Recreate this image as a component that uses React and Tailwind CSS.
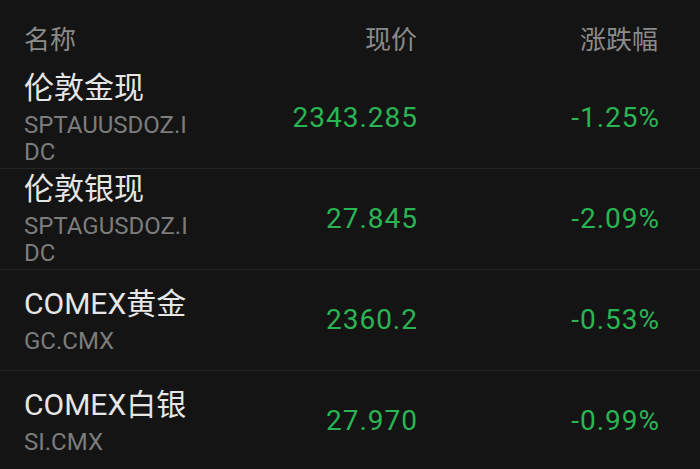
import React from "react";

const rows = [
  { name: "伦敦金现", code: "SPTAUUSDOZ.IDC", price: "2343.285", pct: "-1.25%" },
  { name: "伦敦银现", code: "SPTAGUSDOZ.IDC", price: "27.845", pct: "-2.09%" },
  { name: "COMEX黄金", code: "GC.CMX", price: "2360.2", pct: "-0.53%" },
  { name: "COMEX白银", code: "SI.CMX", price: "27.970", pct: "-0.99%" },
];

export default function App() {
  return (
    <div
      className="w-[700px] h-[469px] overflow-hidden bg-[#141414]"
      style={{ fontFamily: '"Roboto", "Noto Sans CJK SC", sans-serif' }}
    >
      <div className="flex h-[68px] pt-[23px] pl-6 text-[26px] leading-[34px] text-[#8a8a8a]">
        <div className="w-[200px]">名称</div>
        <div className="w-[193px] text-right">现价</div>
        <div className="w-[241px] text-right">涨跌幅</div>
      </div>
      {rows.map((r) => (
        <div
          key={r.name}
          className="flex h-[101px] items-center border-b border-[#242424] pl-6"
        >
          <div className="w-[200px] flex flex-col">
            <div className="text-[30px] leading-[36px] text-[#e6e6e6]">{r.name}</div>
            <div className="mt-[6px] w-[170px] break-all text-[24px] leading-[27px] text-[#7c7c7c]">
              {r.code}
            </div>
          </div>
          <div className="w-[194px] text-right text-[28px] tracking-[1px] text-[#2bb453]">
            {r.price}
          </div>
          <div className="w-[242px] text-right text-[28px] tracking-[1px] text-[#2bb453]">
            {r.pct}
          </div>
        </div>
      ))}
    </div>
  );
}
